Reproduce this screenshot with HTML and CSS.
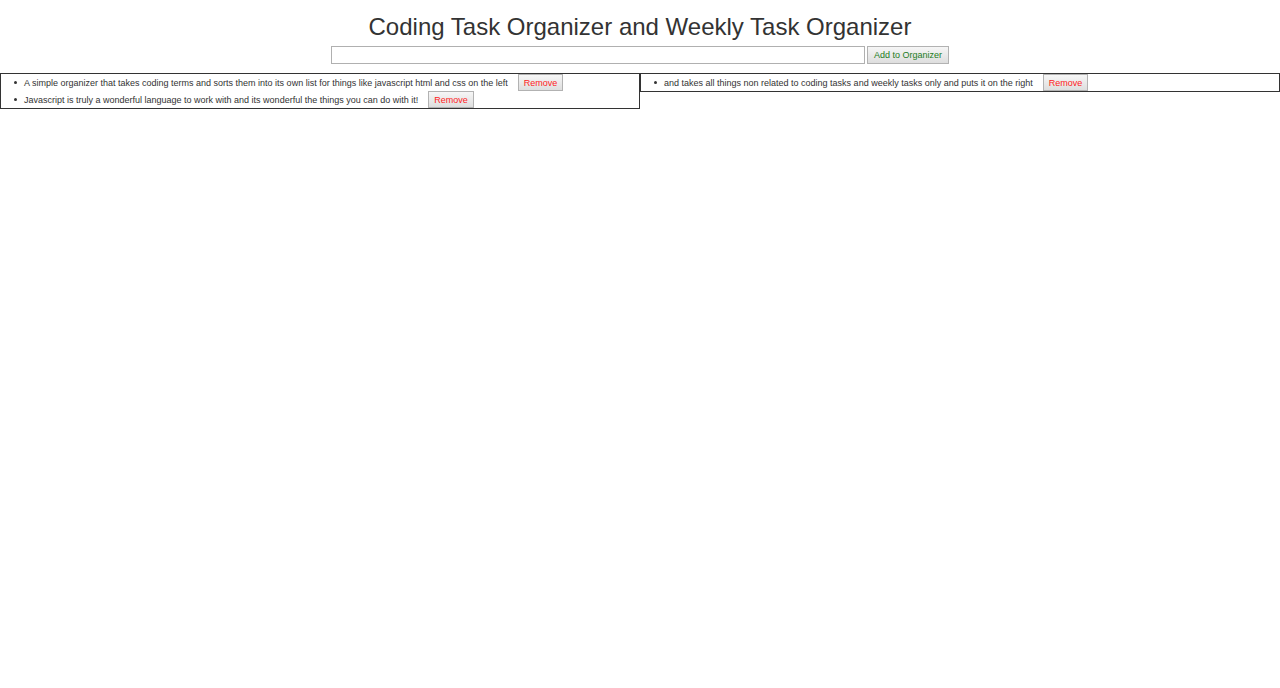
FILE: index.html
```html
<!DOCTYPE html>
<html lang="en">
<head>
<meta charset="utf-8">
<title>Coding Task Organizer and Weekly Task Organizer</title>
<link rel="stylesheet" href="styles.css">
</head>
<body>
<header class="header">
<h1 class="title">Coding Task Organizer and Weekly Task Organizer</h1>
<form class="entry">
<input class="entry-input" type="text" aria-label="New task">
<button class="button button-add" type="button">Add to Organizer</button>
</form>
</header>
<main class="columns">
<ul class="list">
<li class="task"><span class="task-text">A simple organizer that takes coding terms and sorts them into its own list for things like javascript html and css on the left</span><button class="button button-remove" type="button">Remove</button></li>
<li class="task"><span class="task-text">Javascript is truly a wonderful language to work with and its wonderful the things you can do with it!</span><button class="button button-remove" type="button">Remove</button></li>
</ul>
<ul class="list">
<li class="task"><span class="task-text">and takes all things non related to coding tasks and weekly tasks only and puts it on the right</span><button class="button button-remove" type="button">Remove</button></li>
</ul>
</main>
</body>
</html>
```
FILE: styles.css
```css
* { box-sizing: border-box; }
body {
  margin: 0;
  background: #fff;
  color: #333;
  font-family: "Liberation Sans", Arial, sans-serif;
  font-size: 9px;
}
.header { padding-top: 13px; }
.title {
  margin: 0 0 6px;
  font-size: 24px;
  font-weight: 400;
  line-height: 27px;
  text-align: center;
}
.entry {
  display: flex;
  justify-content: center;
  gap: 2px;
  margin-bottom: 9px;
}
.entry-input {
  width: 534px;
  height: 18px;
  padding: 0 2px;
  border: 1px solid #b0b0b0;
  font: inherit;
}
.button {
  flex: none;
  padding: 0 5px;
  border: 1px solid #b2b2b2;
  background: linear-gradient(#f6f6f6, #dedede);
  font: inherit;
  white-space: nowrap;
}
.button-add {
  height: 18px;
  padding: 0 6px;
  color: #1c7c1c;
}
.button-remove {
  height: 17px;
  color: #f22;
}
.columns {
  display: grid;
  grid-template-columns: 1fr 1fr;
  align-items: start;
}
.list {
  margin: 0;
  padding: 0;
  border: 1px solid #333;
  list-style: none;
}
.task {
  display: flex;
  align-items: center;
  min-height: 17px;
  padding-left: 13px;
}
.task::before {
  content: "";
  flex: none;
  width: 3px;
  height: 3px;
  margin-right: 7px;
  border-radius: 50%;
  background: #333;
}
.task-text { margin-right: 10px; }
```
